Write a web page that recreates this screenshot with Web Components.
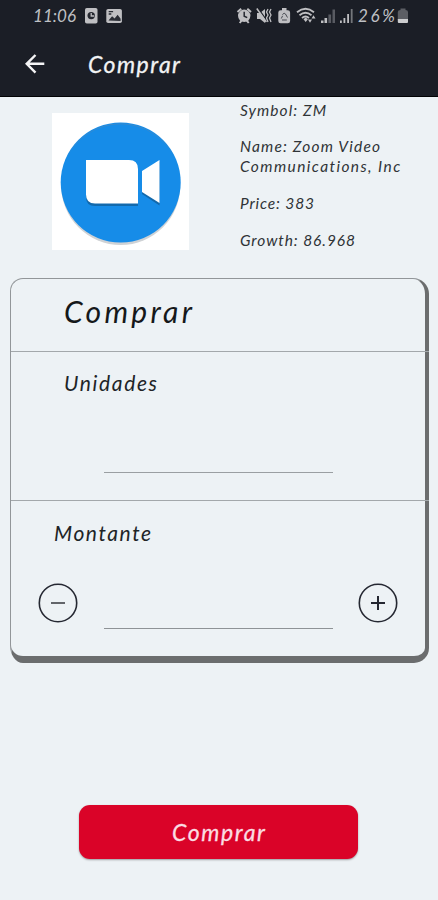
<!DOCTYPE html>
<html lang="pt">
<head>
<meta charset="utf-8">
<title>Comprar</title>
<style>
html, body { margin: 0; height: 900px; overflow: hidden; background: #edf2f5; }
body { font-family: Lato, "Open Sans", "Noto Sans", sans-serif; font-style: italic; color: #24282b; }
</style>
</head>
<body>
<buy-screen></buy-screen>
<script>
function define(name, markup) {
  customElements.define(name, class extends HTMLElement {
    constructor() {
      super();
      this.attachShadow({ mode: 'open' }).innerHTML = markup;
    }
  });
}

define('status-bar', `
  <style>
    :host { display: flex; box-sizing: border-box; height: 32px; padding: 0 29px 0 33px; align-items: center; color: #bfc0c4; }
    svg { display: block; flex: none; }
    hand-text { font-size: 17px; line-height: 32px; }
    .clock { width: 43px; margin-right: 7px; }
    .space { flex: 1; }
  </style>
  <hand-text class="clock" width="43">11:06</hand-text>
  <svg width="42" height="32" viewBox="83 0 42 32">
    <rect x="85" y="8" width="12.5" height="15.5" rx="1.8" fill="#bfbfc2"/>
    <circle cx="91.2" cy="15.6" r="3.7" fill="#252830"/><path d="M91.2 13v3h3" fill="none" stroke="#bfbfc2" stroke-width="1.3"/>
    <rect x="106.3" y="9" width="15.6" height="14" rx="1.8" fill="#bfbfc2"/>
    <path d="M108.5 20.5l3.6-4.3 2.5 2.3 3-3.7 3 4v2.2z" fill="#292c34"/><path d="M108.7 11.7h4.4M108.7 14h2.6" stroke="#292c34" stroke-width="1.3"/>
  </svg>
  <span class="space"></span>
  <svg width="122" height="32" viewBox="236 0 122 32" fill="#bfbfc2">
    <path d="M237.5 12l3.7-3.3M251 12l-3.7-3.3M239.7 23l2-2.5M248.7 23l-2-2.5" stroke="#bfbfc2" stroke-width="2"/>
    <circle cx="244.2" cy="15.8" r="6.2"/><path d="M244.2 11.7v4.5l3 1.5" fill="none" stroke="#252830" stroke-width="1.5"/>
    <path d="M257 13h3l5-4v14l-5-4h-3z"/><path d="M257.8 8l10 14" stroke="#1b1e26" stroke-width="1.3"/><path d="M256.800 8.500l9.500 13.500" stroke="#bfbfc2" stroke-width="1.500"/>
    <path d="M268 9l-1.500 3 1.500 3-1.500 3 1.500 4M271 9l-1.500 3 1.500 3-1.500 3 1.500 4" fill="none" stroke="#bfbfc2" stroke-width="1.3"/>
    <path d="M282 8h4.5v2.3h1.2q2.4 0 2.4 2.2v8.5q0 2.2-2.3 2.2h-7.2q-2.3 0-2.3-2.2v-8.5q0-2.2 2.4-2.2h1.3z"/>
    <path d="M281.3 18.5l1.3-2.700M285.500 14l2 3.500M282 20h4.800M282.400 14.600q1.800-2.600 3.200-.5" fill="none" stroke="#484b52" stroke-width="1"/>
    <g fill="none" stroke="#bfbfc2" stroke-width="1.800"><path d="M297 12.300q8.500-7 17 0M299.500 15.200q6-5 12 0M302 18q3.500-3 7 0"/></g>
    <path d="M303.500 19.200l2.200-1.800 2.200 1.800-2.200 2.700zM308 19.500h4l-2 3.200zM311.500 18.500h4l-2-3.300z"/>
    <path d="M321 20.500h2.500v2.500h-2.500zM324.500 18h2.600v5h-2.600z"/><path d="M328.400 14.500h2.700v8.500h-2.700zM332.500 9.500h2.500v13.500h-2.500z" fill="#595b62"/>
    <path d="M340 20.500h1.800v2.500h-1.800zM343.500 18h1.800v5h-1.800zM347.200 14h1.800v9h-1.800z"/><path d="M350.800 9h1.800v14h-1.800z" fill="#74767b"/>
  </svg>
  <hand-text width="37">26%</hand-text>
  <svg width="14" height="32" viewBox="395 0 14 32"><path d="M400.500 8.500h5v1.500q2.500 0 2.500 2v8h-10.200v-8q0-2 2.700-2z" fill="#5c5e64"/><path d="M397.800 19h10.200v3q0 1-1 1h-8.200q-1 0-1-1z" fill="#cbccce"/></svg>`);

define('app-header', `
  <style>
    :host { display: block; box-sizing: border-box; height: 97px; background: #1b1e26; border-bottom: 1px solid #020305; color: #f2f3f4; }
    nav { display: flex; padding-left: 24px; height: 64px; }
    svg { display: block; margin: 21px 42px 0 0; }
    hand-text { font-size: 23px; line-height: 65px; -webkit-text-stroke: .3px; }
  </style>
  <status-bar></status-bar>
  <nav>
    <svg width="22" height="22" viewBox="0 0 22 22" fill="none" stroke="#f4f4f5" stroke-width="2.400"><path d="M20.300 10.800H3M11.500 2L2.700 10.800l8.800 8.900"/></svg>
    <hand-text width="92"><slot></slot></hand-text>
  </nav>`);

define('stock-summary', `
  <style>
    :host { display: flex; height: 181px; padding-left: 52px; box-sizing: border-box; }
    .logo { display: block; flex: none; margin: 16px 51px 0 0; }
    .facts { display: flex; flex-direction: column; gap: 17px; padding-top: 2.600px; font-size: 15.500px; line-height: 20px; color: #303437; }
    .facts > :first-child { margin-bottom: -.6px; }
  </style>
  <svg class="logo" width="137" height="137" viewBox="0 0 137 137">
    <rect width="137" height="137" fill="#fff"/>
    <circle cx="68.700" cy="72.500" r="59.500" fill="#cfd2d5"/>
    <circle cx="68.700" cy="69.500" r="60" fill="#168ce8"/>
    <path d="M13.500 47a60 60 0 0 1 110.400 0a60.500 60.500 0 0 0-110.400 0z" fill="#4289c3"/>
    <g fill="#1269ac" transform="translate(0 2)"><path d="M34 47h43q9 0 9 9v35H43q-9 0-9-9zM90 58l17.500-11v43.500L90 79z"/></g>
    <path d="M34 47h43q9 0 9 9v34.500H43q-9 0-9-9zM90 58l17.500-11v43L90 79z" fill="#fff"/>
  </svg>
  <div class="facts">
    <hand-text width="86">Symbol: ZM</hand-text>
    <div><hand-text width="140">Name: Zoom Video</hand-text><hand-text width="160">Communications, Inc</hand-text></div>
    <hand-text width="74">Price: 383</hand-text>
    <hand-text width="115">Growth: 86.968</hand-text>
  </div>`);

customElements.define('step-button', class extends HTMLElement {
  constructor() {
    super();
    const plus = this.getAttribute('kind') === 'plus';
    this.attachShadow({ mode: 'open' }).innerHTML = `
      <style>:host { display: block; flex: none; width: 40px; height: 40px; } svg { display: block; }</style>
      <svg width="40" height="40" viewBox="0 0 40 40" fill="none" stroke="#252832">
        <circle cx="20" cy="20" r="18.700" stroke-width="1.600"/>
        <path d="${plus ? 'M13 20h14M20 13v14' : 'M13 20h14'}" stroke-width="2" ${plus ? '' : 'stroke="#62656a"'}/>
      </svg>`;
  }
});

define('order-card', `
  <style>
    :host { display: block; box-sizing: border-box; width: 419px; height: 385px; margin-left: 10px;
      border: solid #929699; border-width: 1.500px 4.500px 7px 1.500px; border-right-color: #6b6d6e; border-bottom-color: #6b6d6e;
      border-radius: 13px 16px 15px 13px / 13px 16px 15px 18px; }
    section { box-sizing: border-box; }
    .title { height: 72.500px; padding-left: 53px; font-size: 30px; line-height: 64px; color: #15181a; }
    .units { height: 149.500px; padding: 14px 0 0 53px; }
    .amount { padding: 15px 0 0 43px; }
    .title, .units { border-bottom: 1px solid #a3a8ab; width: calc(100% + 4px); }
    .label { font-size: 21px; line-height: 34px; color: #202427; }
    .entry { width: 229px; height: 1px; background: #9a9fa2; }
    .units .entry { margin: 72.500px 0 0 40px; }
    .row { display: flex; margin: 33px 0 0 -16px; }
    .row .entry { margin: 45px 25px 0 26px; background: #8e9396; flex: none; }
  </style>
  <section class="title"><hand-text width="128">Comprar</hand-text></section>
  <section class="units"><hand-text class="label" width="93">Unidades</hand-text><div class="entry"></div></section>
  <section class="amount"><hand-text class="label" width="97">Montante</hand-text>
    <div class="row"><step-button kind="minus"></step-button><div class="entry"></div><step-button kind="plus"></step-button></div>
  </section>`);

define('buy-button', `
  <style>
    :host { display: flex; justify-content: center; box-sizing: border-box; width: 279px; height: 54px; margin: 141.500px 0 0 79px;
      border-radius: 11px; background: #da0328; color: #fbdde2; font-size: 23px; line-height: 55px; box-shadow: 0 1px 2px #9b9ea0; }
    hand-text { -webkit-text-stroke: .3px; }
  </style>
  <hand-text width="93"><slot></slot></hand-text>`);

define('buy-screen', `
  <style>:host { display: flow-root; height: 900px; }</style>
  <app-header>Comprar</app-header>
  <stock-summary></stock-summary>
  <order-card></order-card>
  <buy-button>Comprar</buy-button>`);

// A line of text tracked so that it fills the given width.
customElements.define('hand-text', class extends HTMLElement {
  constructor() {
    super();
    this.attachShadow({ mode: 'open' }).innerHTML = `
      <style>:host { display: block; white-space: nowrap; } span { display: inline-block; }</style>
      <span><slot></slot></span>`;
  }
  connectedCallback() {
    // Text passed through an outer slot is counted from the nodes assigned to it.
    const outer = this.querySelector('slot');
    const text = outer ? outer.assignedNodes().map(n => n.textContent).join('') : this.textContent;
    const span = this.shadowRoot.querySelector('span');
    const step = (Number(this.getAttribute('width')) - span.getBoundingClientRect().width) / (text.length - 1);
    span.style.letterSpacing = step + 'px';
    span.style.marginRight = -step + 'px';
  }
});
</script>
</body>
</html>
